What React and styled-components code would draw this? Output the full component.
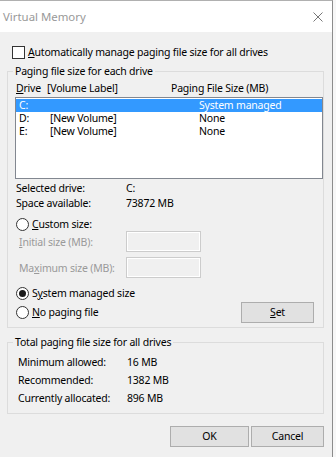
import styled, { createGlobalStyle } from "styled-components";

const GlobalStyle = createGlobalStyle`
  body {
    margin: 0;
    background: #f7f7f7;
    font-family: "Noto Sans", "Open Sans", sans-serif;
    font-size: 10.5px;
    letter-spacing: -0.2px;
    color: #000;
  }
`;

const drives = [
  { id: "C", label: "", size: "System managed", selected: true },
  { id: "D", label: "[New Volume]", size: "None" },
  { id: "E", label: "[New Volume]", size: "None" },
];

const totals = [
  { name: "Minimum allowed:", value: "16 MB" },
  { name: "Recommended:", value: "1382 MB" },
  { name: "Currently allocated:", value: "896 MB" },
];

const Window = styled.div`
  width: 333px;
  min-height: 457px;
  box-sizing: border-box;
  border-top: 1px solid #b0b0b0;
  border-right: 1px solid #8c8c8c;
  background: #f0f0f0;
`;

const TitleBar = styled.div`
  height: 31px;
  background: #fff;
  display: flex;
  align-items: center;
  justify-content: space-between;
  padding: 0 9px 0 3px;
`;

const Title = styled.span`
  font-size: 11.4px;
  letter-spacing: 0;
  color: #999;
  padding-bottom: 1px;
`;

const Key = styled.u`
  text-decoration: underline;
  text-underline-offset: 1px;
`;

const CheckRow = styled.label`
  display: flex;
  align-items: center;
  height: 13px;
  line-height: 13px;
  margin: 14px 0 0 12px;
  gap: 3px;
`;

const Box = styled.span`
  width: 13px;
  height: 13px;
  box-sizing: border-box;
  border: 1px solid #333;
  background: #fff;
`;

const Group = styled.fieldset`
  margin: ${(p) => p.$top}px 0 0 7px;
  width: 317px;
  box-sizing: border-box;
  border: 1px solid #dcdcdc;
  padding: 0;
  min-width: 0;
`;

const Legend = styled.legend`
  margin-left: 5px;
  padding: 0 2px;
  line-height: 13px;
`;

const GroupBody = styled.div`
  padding: 4px 0 ${(p) => p.$bottom}px ${(p) => p.$left}px;
`;

const Header = styled.div`
  display: grid;
  grid-template-columns: 31px 124px 1fr;
  height: 13px;
  line-height: 13px;
`;

const List = styled.div`
  margin: 2px 0 0 -1px;
  width: calc(100% + 1px);
  height: 82px;
  box-sizing: border-box;
  border: 1px solid #828790;
  background: #fff;
  padding-top: 1px;
`;

const Row = styled.div`
  display: grid;
  grid-template-columns: 31px 149px 1fr;
  height: 13px;
  line-height: 13px;
  padding-left: 3px;
  background: ${(p) => (p.$selected ? "#3399ff" : "transparent")};
  color: ${(p) => (p.$selected ? "#fff" : "#000")};
`;

const InfoGrid = styled.div`
  display: grid;
  grid-template-columns: ${(p) => p.$label}px 1fr;
  grid-auto-rows: ${(p) => p.$row}px;
  line-height: ${(p) => p.$row}px;
  margin-top: ${(p) => p.$top}px;
`;

const RadioRow = styled.label`
  display: flex;
  align-items: center;
  height: 13px;
  line-height: 13px;
  gap: 3px;
  margin-top: ${(p) => p.$top}px;
`;

const Radio = styled.span`
  width: 13px;
  height: 13px;
  box-sizing: border-box;
  border: 1px solid #333;
  border-radius: 50%;
  background: #fff;
  display: flex;
  align-items: center;
  justify-content: center;
  &::after {
    content: "";
    width: 7px;
    height: 7px;
    border-radius: 50%;
    background: ${(p) => (p.$checked ? "#1a1a1a" : "transparent")};
  }
`;

const FieldRow = styled.div`
  display: grid;
  grid-template-columns: 110px 75px;
  align-items: center;
  height: 21px;
  margin-top: ${(p) => p.$top}px;
  color: #9a9a9a;
  & > span {
    padding-left: 3px;
  }
`;

const TextBox = styled.div`
  height: 21px;
  box-sizing: border-box;
  border: 1px solid #cccccc;
  box-shadow: inset 0 0 0 1px #fff;
  background: #f0f0f0;
`;

const SetRow = styled.div`
  display: flex;
  align-items: center;
  justify-content: space-between;
  height: 21px;
  margin: 2px 9px 0 0;
`;

const Button = styled.button`
  width: ${(p) => p.$w}px;
  height: 21px;
  box-sizing: border-box;
  border: 1px solid #adadad;
  background: #e1e1e1;
  font: inherit;
  letter-spacing: inherit;
  color: #000;
  padding: 0;
  line-height: 19px;
`;

const Footer = styled.div`
  display: flex;
  justify-content: flex-end;
  gap: 2px;
  margin-top: 12px;
  padding-right: 8px;
`;

const Close = () => (
  <svg width="10" height="10" viewBox="0 0 10 10">
    <path d="M0.5 0.5 L9.5 9.5 M9.5 0.5 L0.5 9.5" stroke="#777" strokeWidth="1" fill="none" />
  </svg>
);

export default function App() {
  return (
    <>
      <GlobalStyle />
      <Window>
        <TitleBar>
          <Title>Virtual Memory</Title>
          <Close />
        </TitleBar>

        <CheckRow>
          <Box />
          <span>
            <Key>A</Key>utomatically manage paging file size for all drives
          </span>
        </CheckRow>

        <Group $top={6}>
          <Legend>Paging file size for each drive</Legend>
          <GroupBody $left={8} $bottom={4}>
            <Header>
              <span>
                <Key>D</Key>rive
              </span>
              <span>[Volume Label]</span>
              <span>Paging File Size (MB)</span>
            </Header>
            <List>
              {drives.map((d) => (
                <Row key={d.id} $selected={d.selected}>
                  <span>{d.id}:</span>
                  <span>{d.label}</span>
                  <span>{d.size}</span>
                </Row>
              ))}
            </List>

            <InfoGrid $label={110} $row={15} $top={2}>
              <span>Selected drive:</span>
              <span>C:</span>
              <span>Space available:</span>
              <span>73872 MB</span>
            </InfoGrid>

            <RadioRow $top={7}>
              <Radio />
              <span>
                <Key>C</Key>ustom size:
              </span>
            </RadioRow>
            <FieldRow $top={0}>
              <span>
                <Key>I</Key>nitial size (MB):
              </span>
              <TextBox />
            </FieldRow>
            <FieldRow $top={5}>
              <span>
                Ma<Key>x</Key>imum size (MB):
              </span>
              <TextBox />
            </FieldRow>

            <RadioRow $top={9}>
              <Radio $checked />
              <span>
                S<Key>y</Key>stem managed size
              </span>
            </RadioRow>
            <SetRow>
              <RadioRow $top={0}>
                <Radio />
                <span>
                  <Key>N</Key>o paging file
                </span>
              </RadioRow>
              <Button $w={73}>
                <Key>S</Key>et
              </Button>
            </SetRow>
          </GroupBody>
        </Group>

        <Group $top={8}>
          <Legend>Total paging file size for all drives</Legend>
          <GroupBody $left={10} $bottom={6}>
            <InfoGrid $label={109} $row={18} $top={0}>
              {totals.map((t) => [
                <span key={t.name}>{t.name}</span>,
                <span key={t.name + "v"}>{t.value}</span>,
              ])}
            </InfoGrid>
          </GroupBody>
        </Group>

        <Footer>
          <Button $w={79}>OK</Button>
          <Button $w={73}>Cancel</Button>
        </Footer>
      </Window>
    </>
  );
}
